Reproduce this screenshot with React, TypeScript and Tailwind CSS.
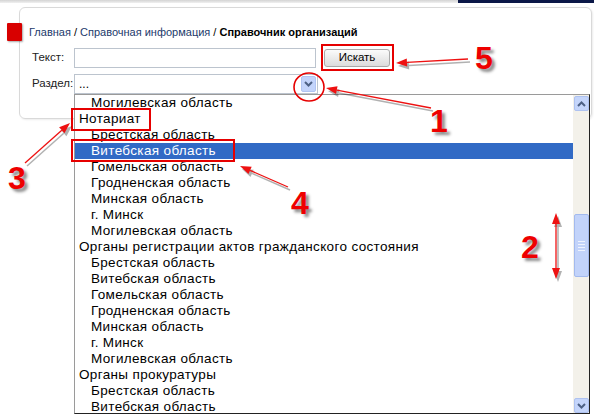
import React from "react";

const items: { t: string; i: boolean; sel?: boolean }[] = [
  { t: "Могилевская область", i: true },
  { t: "Нотариат", i: false },
  { t: "Брестская область", i: true },
  { t: "Витебская область", i: true, sel: true },
  { t: "Гомельская область", i: true },
  { t: "Гродненская область", i: true },
  { t: "Минская область", i: true },
  { t: "г. Минск", i: true },
  { t: "Могилевская область", i: true },
  { t: "Органы регистрации актов гражданского состояния", i: false },
  { t: "Брестская область", i: true },
  { t: "Витебская область", i: true },
  { t: "Гомельская область", i: true },
  { t: "Гродненская область", i: true },
  { t: "Минская область", i: true },
  { t: "г. Минск", i: true },
  { t: "Могилевская область", i: true },
  { t: "Органы прокуратуры", i: false },
  { t: "Брестская область", i: true },
  { t: "Витебская область", i: true },
];

function Chevron({ up }: { up?: boolean }) {
  return (
    <svg width="9" height="6" viewBox="0 0 9 6">
      <path
        d={up ? "M1 5 L4.5 1.5 L8 5" : "M1 1 L4.5 4.5 L8 1"}
        fill="none"
        stroke="#4d6185"
        strokeWidth="2"
      />
    </svg>
  );
}

function Num({ n, x, y }: { n: string; x: number; y: number }) {
  return (
    <div
      className="absolute font-bold text-[32px] leading-none text-[#ee0000] [text-shadow:3px_3px_3px_rgba(0,0,0,0.45)]"
      style={{ left: x, top: y, fontFamily: '"Liberation Sans", Arial, sans-serif' }}
    >
      {n}
    </div>
  );
}

function Arrow({ x1, y1, x2, y2 }: { x1: number; y1: number; x2: number; y2: number }) {
  const a = Math.atan2(y2 - y1, x2 - x1);
  const L = 11;
  const w = 4;
  const bx = x2 - L * Math.cos(a);
  const by = y2 - L * Math.sin(a);
  const px = -Math.sin(a) * w;
  const py = Math.cos(a) * w;
  const pts = `${x2},${y2} ${bx + px},${by + py} ${bx - px},${by - py}`;
  return (
    <g>
      <g transform="translate(2,3)" opacity="0.3">
        <line x1={x1} y1={y1} x2={bx} y2={by} stroke="#000" strokeWidth="1.5" />
        <polygon points={pts} fill="#000" />
      </g>
      <line x1={x1} y1={y1} x2={bx} y2={by} stroke="#ee1111" strokeWidth="1.3" />
      <polygon points={pts} fill="#ee1111" />
    </g>
  );
}

export default function App() {
  return (
    <div
      className="relative w-[594px] h-[420px] bg-white overflow-hidden text-black"
      style={{ fontFamily: '"Liberation Sans", Arial, sans-serif' }}
    >
      {/* top strip */}
      <div className="flex h-[3px]">
        <div className="flex-1 bg-gradient-to-b from-[#d4d4d4] to-[#f0f0f0]" />
        <div className="w-[136px] bg-[#0b1848]" />
      </div>

      {/* card */}
      <div className="ml-[19px] mt-[4px] w-[573px] h-[112px] border border-[#d9d9d9] rounded-[6px] shadow-[1px_1px_2px_rgba(0,0,0,0.08)] pt-[15px] pl-[12px]">
        <div className="flex items-center h-[18px]">
          <div className="-ml-[25px] w-[15px] h-[18px] bg-[#d80000] rounded-[1px] shadow-[1px_1px_2px_rgba(0,0,0,0.35)]" />
          <div className="ml-[7px] text-[11px] leading-none">
            <span className="text-[#1c3a6b]">Главная</span>
            <span> / </span>
            <span className="text-[#1c3a6b]">Справочная информация</span>
            <span> / </span>
            <span className="font-bold">Справочник организаций</span>
          </div>
        </div>

        <div className="flex items-center mt-[7px] h-[20px]">
          <div className="w-[42px] text-[11.5px] text-[#222]">Текст:</div>
          <div className="w-[242px] h-[20px] border border-[#bcc4ce] bg-white" />
          <div className="ml-[8px] w-[66px] h-[18px] rounded-[3px] border border-[#a9a9a9] bg-gradient-to-b from-[#fbfbfb] to-[#dcdcdc] flex items-center justify-center text-[11.5px]">
            Искать
          </div>
        </div>

        <div className="flex items-center mt-[6px] h-[20px]">
          <div className="w-[42px] text-[11.5px] text-[#222]">Раздел:</div>
          <div className="relative w-[244px] h-[20px] border border-[#bcc4ce] bg-white flex items-center pl-[4px] text-[12px]">
            ...
            <div className="absolute right-[1px] top-[1px] w-[15px] h-[16px] rounded-[2px] bg-[#c3d4fb] border border-[#b0c4f2] flex items-center justify-center">
              <Chevron />
            </div>
          </div>
        </div>
      </div>

      {/* dropdown list */}
      <div className="absolute left-[74px] top-[94px] w-[516px] h-[320px] bg-white border-t border-l border-[#9a9a9a] border-r border-b border-r-[#222] border-b-[#222] flex">
        <div className="flex-1 overflow-hidden">
          {items.map((it, k) => (
            <div
              key={k}
              className={`h-[16px] leading-[16px] text-[13.5px] tracking-[0.35px] whitespace-nowrap ${
                it.i ? "pl-[16px]" : "pl-[4px]"
              } ${it.sel ? "bg-[#316ac5] text-white" : "text-black"}`}
            >
              {it.t}
            </div>
          ))}
        </div>
        <div className="w-[16px] h-full bg-[#f3f1ea] flex flex-col items-center pt-[1px] pb-[0px]">
          <div className="w-[15px] h-[15px] rounded-[2px] bg-[#c4d5fb] border border-[#aec2f0] flex items-center justify-center">
            <Chevron up />
          </div>
          <div className="h-[103px]" />
          <div className="w-[15px] h-[63px] rounded-[2px] bg-[#c2d3fa] border border-[#a3baee] flex flex-col items-center justify-center gap-[2px]">
            <div className="w-[7px] h-[1px] bg-[#eef3ff]" />
            <div className="w-[7px] h-[1px] bg-[#eef3ff]" />
            <div className="w-[7px] h-[1px] bg-[#eef3ff]" />
            <div className="w-[7px] h-[1px] bg-[#eef3ff]" />
          </div>
          <div className="flex-1" />
          <div className="w-[15px] h-[15px] rounded-[2px] bg-[#c4d5fb] border border-[#aec2f0] flex items-center justify-center">
            <Chevron />
          </div>
        </div>
      </div>

      {/* annotation boxes */}
      <div className="absolute left-[321px] top-[44px] w-[73px] h-[27px] border-2 border-[#e60000]" />
      <div className="absolute left-[71px] top-[108px] w-[80px] h-[23px] border-2 border-[#e60000]" />
      <div className="absolute left-[71px] top-[139px] w-[164px] h-[23px] border-2 border-[#e60000]" />

      {/* arrows & circle */}
      <svg className="absolute left-0 top-0 pointer-events-none" width="594" height="420">
        <ellipse cx="309" cy="87" rx="15" ry="14" fill="none" stroke="#e60000" strokeWidth="1.6" />
        <Arrow x1={468} y1={59} x2={396} y2={63} />
        <Arrow x1={431} y1={108} x2={326} y2={88} />
        <Arrow x1={25} y1={163} x2={70} y2={123} />
        <Arrow x1={288} y1={187} x2={240} y2={166} />
        <Arrow x1={556} y1={246} x2={556} y2={213} />
        <Arrow x1={556} y1={246} x2={556} y2={279} />
      </svg>

      <Num n="5" x={475} y={42} />
      <Num n="1" x={430} y={105} />
      <Num n="3" x={8} y={162} />
      <Num n="4" x={291} y={187} />
      <Num n="2" x={521} y={231} />
    </div>
  );
}
